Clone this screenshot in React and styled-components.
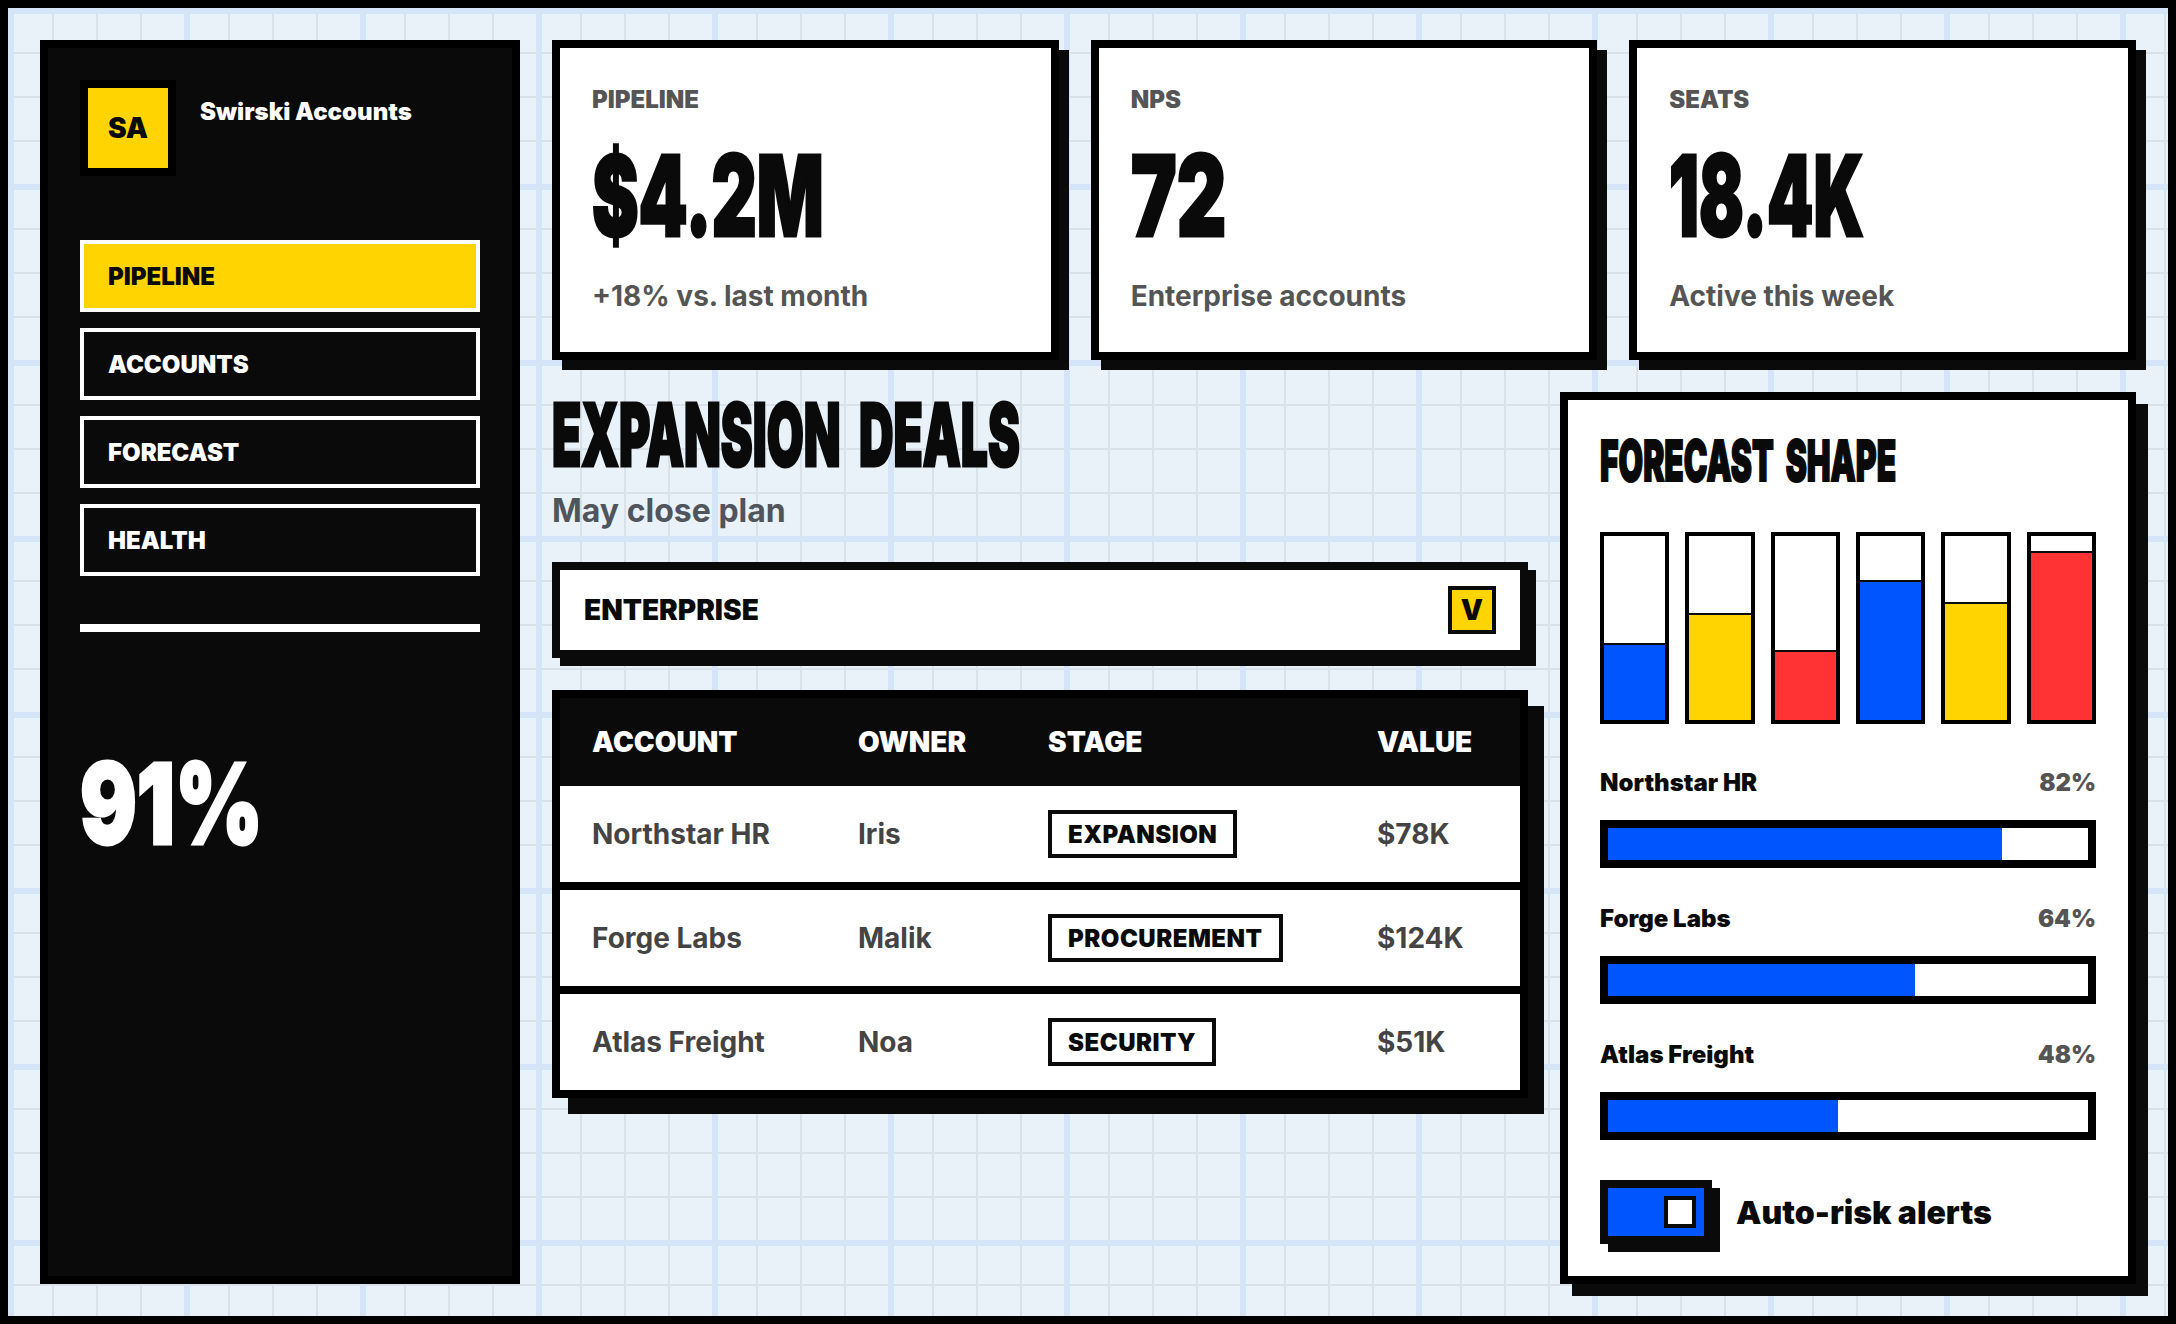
import React from 'react';
import styled, { createGlobalStyle, css } from 'styled-components';

const ink = '#0a0a0a';
const blue = '#0055ff';
const yellow = '#ffd400';
const red = '#ff3333';

const GlobalStyle = createGlobalStyle`
  * { box-sizing: border-box; }
  body {
    margin: 0;
    font-family: Inter, "Liberation Sans", sans-serif;
    color: ${ink};
  }
`;

// no Anton here, so the poster type is Inter Black squeezed sideways
const poster = css`
  font-family: Inter, "Liberation Sans", sans-serif;
  font-weight: 900;
  transform: scaleX(${(p) => p.$squeeze});
  transform-origin: left center;
  white-space: nowrap;
  -webkit-text-stroke: 3px currentColor;
`;

const Page = styled.div`
  width: 2176px;
  height: 1324px;
  border: 8px solid #000;
  padding: 32px;
  display: grid;
  grid-template-columns: 480px 1584px;
  gap: 32px;
  overflow: hidden;
  background-color: #e9f1f9;
  background-image:
    linear-gradient(#d6e4f8 6px, transparent 6px),
    linear-gradient(90deg, #d6e4f8 6px, transparent 6px),
    linear-gradient(#d9e1ea 2px, transparent 2px),
    linear-gradient(90deg, #d9e1ea 2px, transparent 2px);
  background-size: 176px 176px, 176px 176px, 44px 44px, 44px 44px;
`;

const Sidebar = styled.aside`
  background: ${ink};
  border: 8px solid #000;
  padding: 32px;
  color: #fff;
`;

const Brand = styled.div`
  display: flex;
  align-items: flex-start;
  gap: 24px;
`;

const Logo = styled.div`
  width: 96px;
  height: 96px;
  border: 8px solid #000;
  background: ${yellow};
  color: ${ink};
  display: flex;
  align-items: center;
  justify-content: center;
  font-size: 28px;
  font-weight: 900;
`;

const BrandName = styled.div`
  margin-top: 13px;
  font-size: 24px;
  line-height: 38px;
  font-weight: 900;
`;

const Nav = styled.nav`
  margin-top: 64px;
  display: flex;
  flex-direction: column;
  gap: 16px;
`;

const NavItem = styled.div`
  height: 72px;
  border: 4px solid #fff;
  padding-left: 24px;
  display: flex;
  align-items: center;
  font-size: 24px;
  font-weight: 900;
  background: ${(p) => (p.$active ? yellow : ink)};
  color: ${(p) => (p.$active ? ink : '#fff')};
`;

const Divider = styled.div`
  margin-top: 48px;
  height: 8px;
  background: #fff;
`;

const Health = styled.div`
  ${poster}
  margin-top: 111px;
  font-size: 112px;
  line-height: 120px;
`;

const Main = styled.main`
  display: flex;
  flex-direction: column;
  gap: 32px;
  min-width: 0;
`;

const Stats = styled.section`
  display: grid;
  grid-template-columns: repeat(3, 1fr);
  gap: 32px;
`;

const StatCard = styled.div`
  height: 320px;
  background: #fff;
  border: 8px solid #000;
  box-shadow: 10px 10px 0 ${ink};
  padding: 32px;
`;

const StatLabel = styled.div`
  font-size: 24px;
  line-height: 40px;
  font-weight: 900;
  color: #555;
`;

const StatValue = styled.div`
  ${poster}
  margin-top: 14px;
  font-size: 112px;
  line-height: 122px;
  color: ${ink};
`;

const StatNote = styled.div`
  margin-top: 18px;
  font-size: 28px;
  line-height: 45px;
  font-weight: 700;
  color: #555;
`;

const Lower = styled.section`
  flex: 1;
  display: grid;
  grid-template-columns: 976px 576px;
  gap: 32px;
`;

const Deals = styled.div`
  display: flex;
  flex-direction: column;
`;

const Heading = styled.h1`
  ${poster}
  margin: 0;
  font-size: 87px;
  line-height: 86px;
  word-spacing: 16px;
`;

const SubHeading = styled.div`
  margin-top: 11px;
  font-size: 32px;
  line-height: 44px;
  font-weight: 700;
  color: #50555c;
`;

const Filter = styled.div`
  margin-top: 29px;
  height: 96px;
  background: #fff;
  border: 8px solid ${ink};
  box-shadow: 8px 8px 0 ${ink};
  padding: 0 24px;
  display: flex;
  align-items: center;
  justify-content: space-between;
  font-size: 28px;
  font-weight: 900;
`;

const FilterCaret = styled.div`
  width: 48px;
  height: 48px;
  border: 4px solid ${ink};
  background: ${yellow};
  display: flex;
  align-items: center;
  justify-content: center;
  font-size: 28px;
  font-weight: 900;
`;

const Table = styled.div`
  margin-top: 32px;
  background: #fff;
  border: 8px solid #000;
  box-shadow: 16px 16px 0 ${ink};
`;

const columns = css`
  display: grid;
  grid-template-columns: 266px 190px 329px 175px;
  align-items: center;
`;

const TableHead = styled.div`
  ${columns}
  height: 88px;
  background: ${ink};
  color: #fff;
  font-size: 28px;
  font-weight: 900;
`;

const TableRow = styled.div`
  ${columns}
  height: 104px;
  border-bottom: 8px solid #000;
  font-size: 28px;
  font-weight: 700;
  color: #444;
  &:last-child {
    height: 96px;
    border-bottom: 0;
  }
`;

const Cell = styled.div`
  padding-left: 32px;
`;

const Tag = styled.span`
  display: inline-flex;
  align-items: center;
  height: 48px;
  border: 4px solid ${ink};
  padding: 0 16px;
  font-size: 24px;
  font-weight: 900;
  letter-spacing: 0.5px;
  color: ${ink};
`;

const Forecast = styled.div`
  background: #fff;
  border: 8px solid #000;
  box-shadow: 12px 12px 0 ${ink};
  padding: 32px;
`;

const ForecastTitle = styled.h2`
  ${poster}
  margin: 0;
  font-size: 57px;
  line-height: 58px;
  word-spacing: 10px;
  -webkit-text-stroke-width: 2px;
`;

const Bars = styled.div`
  margin-top: 42px;
  height: 192px;
  display: grid;
  grid-template-columns: repeat(6, 1fr);
  gap: 16px;
`;

const Bar = styled.div`
  border: 4px solid #000;
  display: flex;
  flex-direction: column;
  justify-content: flex-end;
`;

const BarFill = styled.div`
  background: ${(p) => p.$color};
  border-top: 2px solid ${ink};
`;

const Meters = styled.div`
  margin-top: 40px;
  display: flex;
  flex-direction: column;
  gap: 32px;
`;

const MeterLabel = styled.div`
  display: flex;
  justify-content: space-between;
  margin-bottom: 18px;
  font-size: 24px;
  line-height: 38px;
  font-weight: 900;
`;

const MeterPercent = styled.span`
  color: #555;
`;

const Meter = styled.div`
  height: 48px;
  border: 8px solid #000;
  background: #fff;
`;

const MeterFill = styled.div`
  height: 100%;
  background: ${blue};
`;

const ToggleRow = styled.div`
  margin-top: 40px;
  display: flex;
  align-items: center;
  gap: 24px;
  font-size: 32px;
  font-weight: 900;
`;

const Toggle = styled.div`
  width: 112px;
  height: 64px;
  border: 8px solid ${ink};
  background: ${blue};
  box-shadow: 8px 8px 0 ${ink};
  padding: 8px;
  display: flex;
  justify-content: flex-end;
`;

const Knob = styled.div`
  width: 32px;
  height: 32px;
  border: 4px solid ${ink};
  background: #fff;
`;

const navItems = ['PIPELINE', 'ACCOUNTS', 'FORECAST', 'HEALTH'];

const stats = [
  { label: 'PIPELINE', value: '$4.2M', note: '+18% vs. last month', squeeze: 0.625 },
  { label: 'NPS', value: '72', note: 'Enterprise accounts', squeeze: 0.685 },
  { label: 'SEATS', value: '18.4K', note: 'Active this week', squeeze: 0.59 },
];

const deals = [
  { account: 'Northstar HR', owner: 'Iris', stage: 'EXPANSION', value: '$78K' },
  { account: 'Forge Labs', owner: 'Malik', stage: 'PROCUREMENT', value: '$124K' },
  { account: 'Atlas Freight', owner: 'Noa', stage: 'SECURITY', value: '$51K' },
];

const shape = [
  { height: 42, color: blue },
  { height: 58, color: yellow },
  { height: 38, color: red },
  { height: 76, color: blue },
  { height: 64, color: yellow },
  { height: 92, color: red },
];

const meters = [
  { name: 'Northstar HR', percent: 82 },
  { name: 'Forge Labs', percent: 64 },
  { name: 'Atlas Freight', percent: 48 },
];

const App = () => (
  <>
    <GlobalStyle />
    <Page>
      <Sidebar>
        <Brand>
          <Logo>SA</Logo>
          <BrandName>Swirski Accounts</BrandName>
        </Brand>
        <Nav>
          {navItems.map((item, i) => (
            <NavItem key={item} $active={i === 0}>{item}</NavItem>
          ))}
        </Nav>
        <Divider />
        <Health $squeeze={0.752}>91%</Health>
      </Sidebar>

      <Main>
        <Stats>
          {stats.map((s) => (
            <StatCard key={s.label}>
              <StatLabel>{s.label}</StatLabel>
              <StatValue $squeeze={s.squeeze}>{s.value}</StatValue>
              <StatNote>{s.note}</StatNote>
            </StatCard>
          ))}
        </Stats>

        <Lower>
          <Deals>
            <Heading $squeeze={0.55}>EXPANSION DEALS</Heading>
            <SubHeading>May close plan</SubHeading>
            <Filter>
              ENTERPRISE
              <FilterCaret>V</FilterCaret>
            </Filter>
            <Table>
              <TableHead>
                <Cell>ACCOUNT</Cell>
                <Cell>OWNER</Cell>
                <Cell>STAGE</Cell>
                <Cell>VALUE</Cell>
              </TableHead>
              {deals.map((d) => (
                <TableRow key={d.account}>
                  <Cell>{d.account}</Cell>
                  <Cell>{d.owner}</Cell>
                  <Cell><Tag>{d.stage}</Tag></Cell>
                  <Cell>{d.value}</Cell>
                </TableRow>
              ))}
            </Table>
          </Deals>

          <Forecast>
            <ForecastTitle $squeeze={0.557}>FORECAST SHAPE</ForecastTitle>
            <Bars>
              {shape.map((b, i) => (
                <Bar key={i}>
                  <BarFill $color={b.color} style={{ height: `${b.height}%` }} />
                </Bar>
              ))}
            </Bars>
            <Meters>
              {meters.map((m) => (
                <div key={m.name}>
                  <MeterLabel>
                    {m.name}
                    <MeterPercent>{m.percent}%</MeterPercent>
                  </MeterLabel>
                  <Meter>
                    <MeterFill style={{ width: `${m.percent}%` }} />
                  </Meter>
                </div>
              ))}
            </Meters>
            <ToggleRow>
              <Toggle><Knob /></Toggle>
              Auto-risk alerts
            </ToggleRow>
          </Forecast>
        </Lower>
      </Main>
    </Page>
  </>
);

export default App;
